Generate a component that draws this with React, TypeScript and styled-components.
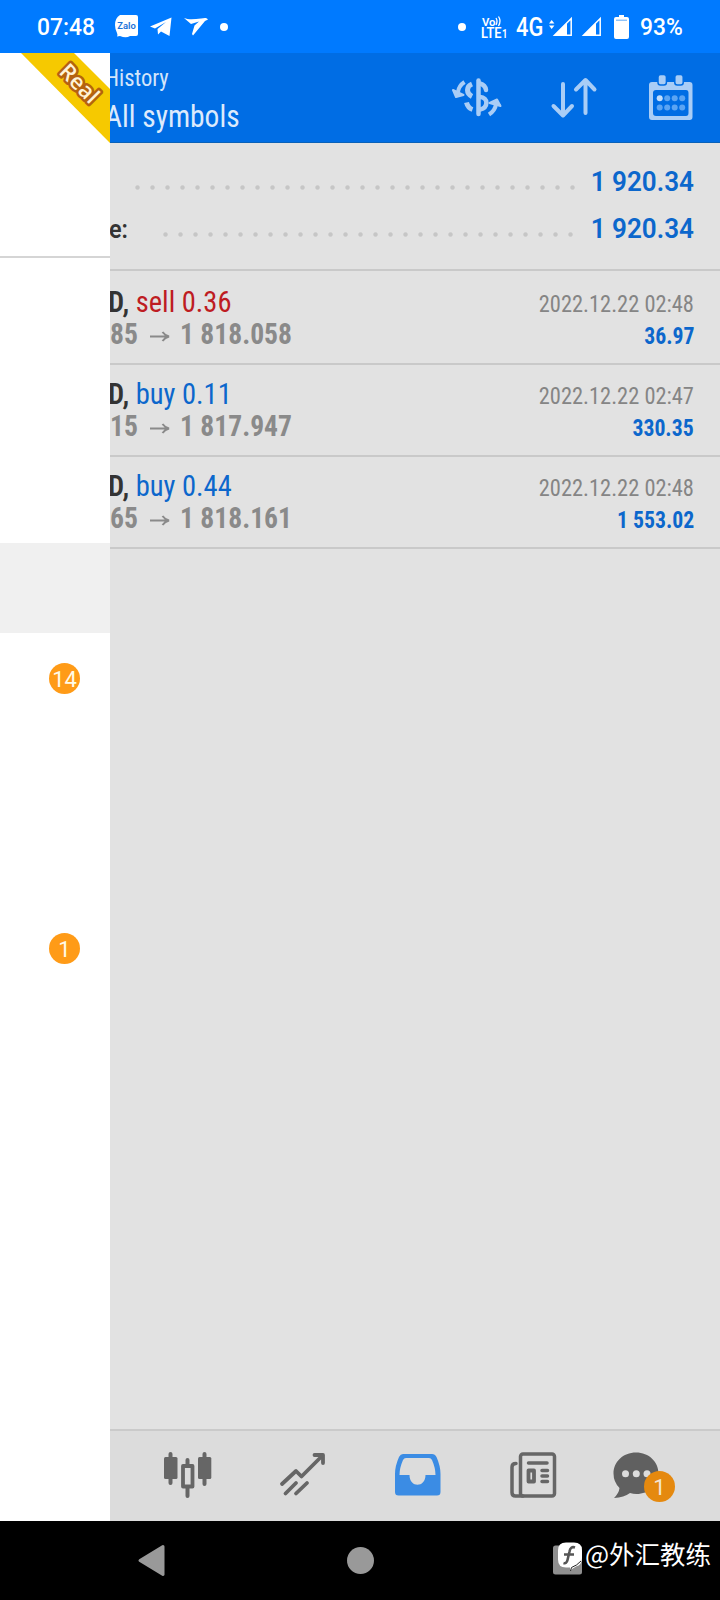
import React from 'react';
import styled, { createGlobalStyle } from 'styled-components';

const GlobalStyle = createGlobalStyle`
  * { box-sizing: border-box; }
  body { margin: 0; background: #000; font-family: Roboto, "Noto Sans CJK SC", sans-serif; }
  svg { display: block; flex: none; overflow: visible; }
`;

const Phone = styled.div`
  width: 720px;
  height: 1600px;
  display: flex;
  flex-direction: column;
  overflow: hidden;
`;

/* ---------- status bar ---------- */

const StatusBar = styled.header`
  height: 53px;
  flex: none;
  display: flex;
  align-items: center;
  justify-content: space-between;
  padding: 0 38px 0 37px;
  background: #007aff;
  color: #fff;
`;

const StatusGroup = styled.div`
  display: flex;
  align-items: center;
`;

const StatusText = styled.span<{ $size?: number; $width: number; $squeeze?: number }>`
  width: ${(p) => p.$width}px;
  font-size: ${(p) => p.$size ?? 24}px;
  line-height: 54px;
  height: 53px;
  font-weight: 500;
  white-space: nowrap;
  transform: scaleX(${(p) => p.$squeeze ?? 0.95});
  transform-origin: left;
`;

const Gap = styled.i<{ $w: number }>`
  width: ${(p) => p.$w}px;
  flex: none;
`;

const Dot = styled.i`
  width: 8px;
  height: 8px;
  border-radius: 50%;
  background: #fff;
`;

/* ---------- main area ---------- */

const Main = styled.main`
  height: 1468px;
  flex: none;
  display: flex;
`;

const Drawer = styled.aside`
  width: 110px;
  flex: none;
  background: #fff;
  display: flex;
  flex-direction: column;
`;

const AccountPanel = styled.div`
  height: 205px;
  border-bottom: 2px solid #d5d5d5;
`;

const DrawerItem = styled.div<{ $active?: boolean }>`
  height: 90px;
  display: flex;
  align-items: center;
  justify-content: flex-end;
  padding-right: 30px;
  background: ${(p) => (p.$active ? '#f0f0f0' : 'transparent')};
`;

const DrawerSpace = styled.div<{ $h: number }>`
  height: ${(p) => p.$h}px;
`;

const Count = styled.span<{ $muted?: boolean }>`
  width: 31px;
  height: 31px;
  border-radius: 50%;
  background: ${(p) => (p.$muted ? '#e5890f' : '#ff9b17')};
  color: ${(p) => (p.$muted ? '#f3e6d3' : '#fffbe8')};
  font-size: 22px;
  line-height: 33px;
  text-align: center;
`;

const Content = styled.section`
  width: 610px;
  display: flex;
  flex-direction: column;
  overflow: hidden;
  background: #e2e2e2;
`;

const Toolbar = styled.div`
  height: 90px;
  flex: none;
  display: flex;
  align-items: center;
  padding-right: 27px;
  background: #006de4;
  border-bottom: 1px solid #0a61b8;
`;

const Condensed = styled.div`
  font-family: "Roboto Condensed", Roboto, sans-serif;
  font-stretch: 75%;
  white-space: nowrap;
  transform-origin: left;
`;

const Titles = styled.div`
  flex: 1;
  margin-left: -5px;
  padding-top: 4px;
  display: flex;
  flex-direction: column;
`;

const ScreenName = styled(Condensed)`
  font-size: 24px;
  line-height: 32px;
  color: #d3e5fb;
  transform: scaleX(0.94);
`;

const Filter = styled(Condensed)`
  font-size: 32px;
  line-height: 44px;
  color: #dceafc;
  transform: scaleX(0.92);
`;

const Summary = styled.div`
  height: 128px;
  flex: none;
  padding: 16px 26px 0 0;
  border-bottom: 2px solid #c9c9c9;
`;

const SummaryRow = styled.div`
  height: 47px;
  display: flex;
  align-items: center;
  font-size: 27px;
  line-height: 47px;
`;

const SummaryLabel = styled.span<{ $w: number }>`
  width: ${(p) => p.$w}px;
  margin-left: -1px;
  font-size: 26px;
  font-weight: 600;
  color: #333;
  transform: scaleX(0.9);
  transform-origin: left;
`;

const Leader = styled.span<{ $dots: number }>`
  width: ${(p) => p.$dots * 15}px;
  height: 5px;
  margin-top: 10px;
  background: radial-gradient(circle at 7.5px 2.5px, #c6c6c6 1.7px, transparent 2.7px) 0 0 / 15px 5px;
`;

const SummaryValue = styled.span`
  margin-left: auto;
  font-weight: 600;
  color: #0c67cc;
  transform: scaleX(0.965);
  transform-origin: right;
`;

const Deal = styled.div<{ $first: boolean }>`
  height: ${(p) => (p.$first ? 94 : 92)}px;
  flex: none;
  display: flex;
  justify-content: space-between;
  padding: ${(p) => (p.$first ? 15 : 13)}px 26px 0 0;
  border-bottom: 2px solid #c9c9c9;
`;

const DealColumn = styled.div<{ $right?: boolean }>`
  display: flex;
  flex-direction: column;
  align-items: ${(p) => (p.$right ? 'flex-end' : 'flex-start')};
`;

const Symbol = styled(Condensed)`
  margin-left: -2px;
  font-size: 30px;
  line-height: 32px;
  font-weight: 600;
  color: #333;
  transform: scaleX(0.95);
`;

const Side = styled.span<{ $sell?: boolean }>`
  font-weight: 400;
  color: ${(p) => (p.$sell ? '#be1c22' : '#0c67cc')};
`;

const Prices = styled.div`
  display: flex;
  align-items: center;
`;

const Price = styled(Condensed)<{ $w?: number }>`
  width: ${(p) => (p.$w ? `${p.$w}px` : 'auto')};
  font-size: 30px;
  line-height: 32px;
  font-weight: 700;
  color: #8a8a8a;
  transform: scaleX(0.92);
`;

const Time = styled(Condensed)`
  font-size: 24px;
  line-height: 36px;
  color: #858585;
  transform: scaleX(0.935);
  transform-origin: right;
`;

const Profit = styled(Condensed)`
  font-size: 24px;
  line-height: 28px;
  font-weight: 700;
  color: #0c67cc;
  transform: scaleX(0.905);
  transform-origin: right;
`;

const TabBar = styled.nav`
  height: 92px;
  flex: none;
  margin-top: auto;
  display: flex;
  align-items: center;
  gap: 67px;
  padding: 0 0 3px 54px;
  background: #dcdcdc;
  border-top: 2px solid #cacaca;
`;

const Tab = styled.div<{ $tight?: boolean }>`
  position: relative;
  margin-left: ${(p) => (p.$tight ? -11 : 0)}px;

  ${Count} {
    position: absolute;
    left: 31px;
    top: 20px;
  }
`;

/* ---------- system navigation ---------- */

const SystemNav = styled.footer`
  height: 79px;
  flex: none;
  display: flex;
  align-items: center;
  padding-left: 138px;
  background: #000;
`;

const Home = styled.i`
  width: 27px;
  height: 27px;
  margin: 0 179px 0 182px;
  border-radius: 50%;
  background: #999;
`;

const Credit = styled.span`
  margin: -16px 0 0 2px;
  font-family: "Noto Sans CJK SC", sans-serif;
  font-size: 25.500px;
  line-height: 36px;
  color: #fff;
  white-space: nowrap;
`;

/* ---------- icons ---------- */

const Ribbon = () => (
  <svg width="110" height="90" viewBox="0 0 110 90">
    <path d="M21 0H74L110 36V90Z" fill="#f6c900" />
    <text
      x="79"
      y="38"
      transform="rotate(45 79 31)"
      textAnchor="middle"
      fontFamily="Open Sans"
      fontWeight="600"
      fontSize="22"
      fill="#fff3d6"
      stroke="#b5620f"
      strokeWidth="5"
      strokeLinejoin="round"
      paintOrder="stroke"
    >
      Real
    </text>
  </svg>
);

const ZaloIcon = () => (
  <svg width="23" height="23" viewBox="0 0 23 23">
    <path d="M5 0H21Q23 0 23 2V19Q23 21 21 21H15Q11 23.500 5 21L2 21.500Q3 20 2 18Q0 14 0 10Q0 3 5 0Z" fill="#fff" />
    <text x="11.500" y="14" textAnchor="middle" fontFamily="Roboto" fontWeight="600" fontSize="9.500" fill="#1b72d8" textLength="18.500" lengthAdjust="spacingAndGlyphs">
      Zalo
    </text>
  </svg>
);

const TelegramIcon = () => (
  <svg width="22" height="20" viewBox="0 0 22 20">
    <path d="M0 9.500L21.500 0.500L19.500 19L11 14.500L8 17.500L7.500 12L16 5L5 11.500Z" fill="#fff" />
  </svg>
);

const SwallowIcon = () => (
  <svg width="24" height="19" viewBox="0 0 24 19">
    <path d="M0 1C5 3 11 2 17 1.500C20 1 22 0 24 2.500L21 4L9 18.500L8 17L10.500 8.500L15 4.500L7 7Z" fill="#fff" />
  </svg>
);

const VolteIcon = () => (
  <svg width="27" height="22" viewBox="0 0 27 22" fill="#fff" fontFamily="Roboto" fontWeight="600">
    <text x="1" y="9.500" fontSize="11.500" textLength="13.500" lengthAdjust="spacingAndGlyphs">Vo</text>
    <text x="0" y="21.500" fontSize="14" textLength="20.500" lengthAdjust="spacingAndGlyphs">LTE</text>
    <text x="21" y="21.500" fontSize="12.500" textLength="5.500" lengthAdjust="spacingAndGlyphs">1</text>
    <path d="M15 2Q17 5 15 9M17.500 0.500Q20.500 5 17.500 10" fill="none" stroke="#fff" strokeWidth="1.300" />
  </svg>
);

const SignalIcon = ({ data }: { data?: boolean }) => (
  <svg width={data ? 21 : 19} height="19" viewBox={data ? '-2 0 21 19' : '0 0 19 19'}>
    <path d="M1.500 18.200L18.200 1.500V18.200Z" fill="none" stroke="#fff" strokeWidth="1.500" />
    <path d="M1 18.500L14 5.500V18.500Z" fill="#fff" />
    {data && <path d="M-4 6.500L-1.300 3L1.400 6.500ZM-4 8.500H1.400L-1.300 12Z" fill="#fff" />}
  </svg>
);

const BatteryIcon = () => (
  <svg width="15" height="24" viewBox="0 0 15 24">
    <path d="M5 0H10V2H13Q15 2 15 4V22Q15 24 13 24H2Q0 24 0 22V4Q0 2 2 2H5Z" fill="#fff" />
    <path d="M2 5.200H13" stroke="#5fa9f5" strokeWidth="1" />
  </svg>
);

const CurrencyIcon = () => (
  <svg width="50" height="42" viewBox="0 0 50 42" fill="none" stroke="#a9cdf6" strokeWidth="4.500" strokeLinecap="round">
    <path d="M26.500 3.500V37" />
    <path d="M28 6.500C32 7.500 33.500 9.500 34 13" />
    <path d="M20 7C14 9.500 14 16.500 20 19.500" strokeLinecap="butt" strokeWidth="5" />
    <path d="M28 20C36.500 20.500 36.500 30.500 28 32.500" />
    <path d="M14.500 25.500C15.500 29.500 17.500 31.500 20.500 32.500" strokeLinecap="butt" strokeWidth="5" />
    <path d="M12.500 5C8 8 6.500 11 6 15" strokeWidth="4" strokeLinecap="butt" />
    <path d="M1 13L4 20L11.500 18Z" fill="#a9cdf6" stroke="#a9cdf6" strokeWidth="2" strokeLinejoin="round" />
    <path d="M37 37.500C41.500 34.500 43.500 32 44 27" strokeWidth="4" strokeLinecap="butt" />
    <path d="M37.500 26L45 22.500L48.500 29Z" fill="#a9cdf6" stroke="#a9cdf6" strokeWidth="2" strokeLinejoin="round" />
  </svg>
);

const SortIcon = () => (
  <svg width="46" height="42" viewBox="0 0 46 42" fill="none" stroke="#a9cdf6" strokeWidth="4" strokeLinecap="round" strokeLinejoin="round">
    <path d="M12 7V37M2.500 29L12 38.500L21 29" />
    <path d="M34.500 36V5M25 12.500L34.500 3L43.500 12.500" />
  </svg>
);

const CalendarIcon = () => (
  <svg width="44" height="46" viewBox="0 0 44 46">
    <path
      fillRule="evenodd"
      fill="#a9cdf6"
      d="M3 7H40.500Q43.500 7 43.500 10V42Q43.500 45 40.500 45H3Q0 45 0 42V10Q0 7 3 7ZM7 15Q4 15 4 18V38Q4 41 7 41H37Q39.500 41 39.500 38V18Q39.500 15 37 15Z"
    />
    {[13.2, 30].map((x) => (
      <rect key={x} x={x - 4.2} y="-0.500" width="8.400" height="10.500" rx="2.500" fill="#a9cdf6" stroke="#006de4" strokeWidth="1.500" />
    ))}
    {[0, 1, 2, 3, 4, 5, 6, 7].map((i) => (
      <circle key={i} cx={10.7 + (i % 4) * 7.5} cy={i < 4 ? 23.3 : 32.5} r="3" fill={i ? '#5ba4f3' : '#c3ddfa'} />
    ))}
  </svg>
);

const ArrowIcon = () => (
  <svg width="20" height="12" viewBox="0 0 20 12" fill="none" stroke="#8a8a8a" strokeWidth="2">
    <path d="M0 8.500H18M12.500 4Q15 7.500 19 8.500Q15 9.500 12.500 13" />
  </svg>
);

const CandlesIcon = () => (
  <svg width="48" height="48" viewBox="0 0 48 48">
    <g stroke="#666" strokeWidth="4" strokeLinecap="round">
      <path d="M6.500 3V32M40.500 3V33M23.500 9V16M23.500 37V45" />
    </g>
    <rect x="0" y="6" width="13.500" height="22" rx="1.500" fill="#666" />
    <rect x="34" y="6" width="13.300" height="22" rx="1.500" fill="#666" />
    <rect x="19" y="15" width="9.500" height="20.500" fill="#dcdcdc" stroke="#666" strokeWidth="3.800" strokeLinejoin="round" />
  </svg>
);

const TrendIcon = () => (
  <svg width="48" height="48" viewBox="0 0 48 48" fill="none" stroke="#666" strokeWidth="3.800" strokeLinecap="round" strokeLinejoin="round">
    <path d="M3 33L17 20L22.500 25.500L43 5M35.500 4H44V12" />
    <path d="M6.500 42.500L17 32M17 42.500L28 32" />
  </svg>
);

const InboxIcon = () => (
  <svg width="48" height="48" viewBox="0 0 48 48">
    <path
      fillRule="evenodd"
      fill="#3b8ce4"
      d="M9 3H38Q41 3 42.500 6Q46.500 15 46.500 23V41Q46.500 44.500 43 44.500H4.500Q1 44.500 1 41V23Q1 15 5 6Q6.500 3 9 3ZM12 7Q10 7 9 9Q5.500 17 5.500 24H15.500C15.500 37 31.500 37 31.500 24H41.500Q41.500 17 38 9Q37 7 35 7Z"
    />
  </svg>
);

const NewsIcon = () => (
  <svg width="48" height="48" viewBox="0 0 48 48" fill="none" stroke="#666" strokeWidth="3.500" strokeLinecap="round" strokeLinejoin="round">
    <rect x="11.500" y="3" width="34" height="42" rx="2.500" />
    <path d="M7 12.500Q3 12.500 3 16V41.500Q3 45 6.500 45H14" />
    <path d="M19.500 12H38M33 19.500H38.500M33 25H38.500M33 30.500H38.500" strokeWidth="3.500" />
    <rect x="19.500" y="19.500" width="5.500" height="11" strokeWidth="3.800" />
  </svg>
);

const ChatIcon = () => (
  <svg width="48" height="48" viewBox="0 0 48 48">
    <path d="M23 1.500C36 1.500 45.500 11 45.500 22.500C45.500 34 36 43 23.500 43Q20 43 17 42Q11 46.500 1 47Q6 42 6.500 37Q0.500 31 0.500 22.500C0.500 11 10 1.500 23 1.500Z" fill="#606060" />
    {[12.5, 23.3, 34].map((x) => (
      <circle key={x} cx={x} cy="22.700" r="3.500" fill="#dcdcdc" />
    ))}
  </svg>
);

const BackIcon = () => (
  <svg width="27" height="31" viewBox="0 0 27 31">
    <path d="M25 1.500L2 15.500L25 29.500Z" fill="#999" stroke="#999" strokeWidth="3" strokeLinejoin="round" />
  </svg>
);

const RecentsIcon = () => (
  <svg width="30" height="36" viewBox="0 0 30 36">
    <rect x="0" y="2.500" width="29" height="29" rx="2.500" fill="#8f8f8f" />
    <path d="M13 -0.500H21Q29 -0.500 29 7.500V15Q29 22 23 23.500Q19 25.500 17.500 28Q17 26 17 24.500H13Q5 24.500 5 16.500V7.500Q5 -0.500 13 -0.500Z" fill="#fff" />
    <path d="M22 4.500Q17.500 3 16.500 8.500L14.500 17Q13.500 21 10.500 20M11 11.500H21" fill="none" stroke="#555" strokeWidth="2.600" />
    <path d="M28 18Q24 22.500 18.500 24.500L17.500 28" fill="none" stroke="#222" strokeWidth="1" />
  </svg>
);

const deals = [
  { sell: true, side: 'sell 0.36', from: '85', to: '1 818.058', time: '2022.12.22 02:48', profit: '36.97' },
  { sell: false, side: 'buy 0.11', from: '15', to: '1 817.947', time: '2022.12.22 02:47', profit: '330.35' },
  { sell: false, side: 'buy 0.44', from: '65', to: '1 818.161', time: '2022.12.22 02:48', profit: '1 553.02' },
];

export default function App() {
  return (
    <Phone>
      <GlobalStyle />
      <StatusBar>
        <StatusGroup>
          <StatusText $width={78}>07:48</StatusText>
          <ZaloIcon />
          <Gap $w={12} />
          <TelegramIcon />
          <Gap $w={12} />
          <SwallowIcon />
          <Gap $w={12} />
          <Dot />
        </StatusGroup>
        <StatusGroup>
          <Dot />
          <Gap $w={15} />
          <VolteIcon />
          <Gap $w={8} />
          <StatusText $width={35} $size={26} $squeeze={0.84}>4G</StatusText>
          <SignalIcon data />
          <Gap $w={10} />
          <SignalIcon />
          <Gap $w={13} />
          <BatteryIcon />
          <Gap $w={11} />
          <StatusText $width={42}>93%</StatusText>
        </StatusGroup>
      </StatusBar>

      <Main>
        <Drawer>
          <AccountPanel>
            <Ribbon />
          </AccountPanel>
          <DrawerSpace $h={285} />
          <DrawerItem $active />
          <DrawerItem>
            <Count>14</Count>
          </DrawerItem>
          <DrawerSpace $h={180} />
          <DrawerItem>
            <Count>1</Count>
          </DrawerItem>
        </Drawer>

        <Content>
          <Toolbar>
            <Titles>
              <ScreenName>History</ScreenName>
              <Filter>All symbols</Filter>
            </Titles>
            <CurrencyIcon />
            <Gap $w={49} />
            <SortIcon />
            <Gap $w={52} />
            <CalendarIcon />
          </Toolbar>
          <Summary>
            <SummaryRow>
              <SummaryLabel $w={21} />
              <Leader $dots={30} />
              <SummaryValue>1 920.34</SummaryValue>
            </SummaryRow>
            <SummaryRow>
              <SummaryLabel $w={49}>e:</SummaryLabel>
              <Leader $dots={28} />
              <SummaryValue>1 920.34</SummaryValue>
            </SummaryRow>
          </Summary>
          <section>
            {deals.map((d, i) => (
              <Deal key={d.side} $first={i === 0}>
                <DealColumn>
                  <Symbol>
                    D, <Side $sell={d.sell}>{d.side}</Side>
                  </Symbol>
                  <Prices>
                    <Price $w={40}>{d.from}</Price>
                    <ArrowIcon />
                    <Gap $w={10} />
                    <Price>{d.to}</Price>
                  </Prices>
                </DealColumn>
                <DealColumn $right>
                  <Time>{d.time}</Time>
                  <Profit>{d.profit}</Profit>
                </DealColumn>
              </Deal>
            ))}
          </section>
          <TabBar>
            <Tab><CandlesIcon /></Tab>
            <Tab><TrendIcon /></Tab>
            <Tab><InboxIcon /></Tab>
            <Tab><NewsIcon /></Tab>
            <Tab $tight>
              <ChatIcon />
              <Count $muted>1</Count>
            </Tab>
          </TabBar>
        </Content>
      </Main>

      <SystemNav>
        <BackIcon />
        <Home />
        <RecentsIcon />
        <Credit>@外汇教练</Credit>
      </SystemNav>
    </Phone>
  );
}
